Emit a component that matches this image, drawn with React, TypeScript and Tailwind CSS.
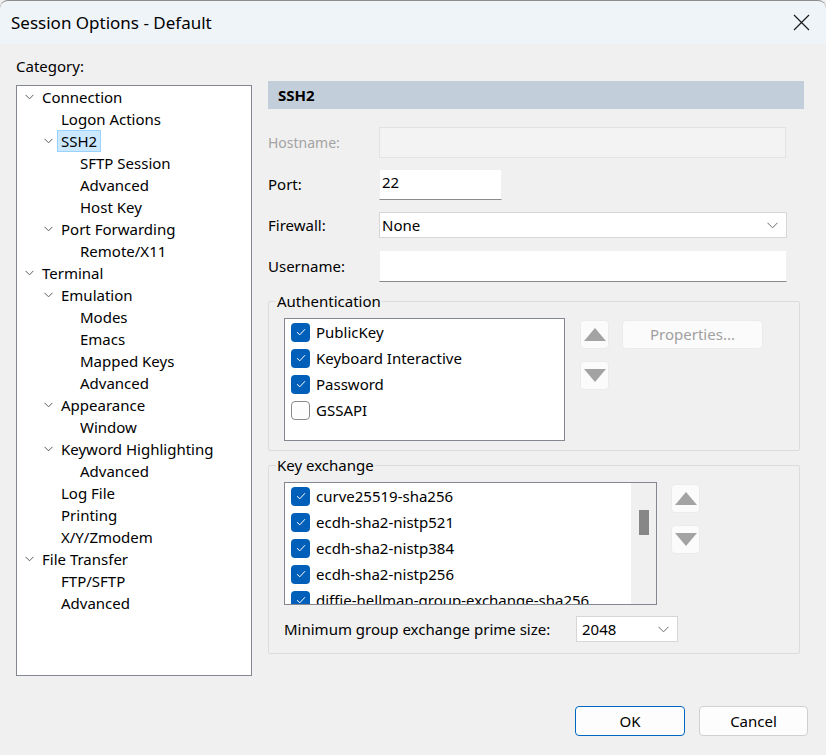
import React from "react";

type TreeItem = { label: string; level: 0 | 1 | 2; open?: boolean; selected?: boolean };

const tree: TreeItem[] = [
  { label: "Connection", level: 0, open: true },
  { label: "Logon Actions", level: 1 },
  { label: "SSH2", level: 1, open: true, selected: true },
  { label: "SFTP Session", level: 2 },
  { label: "Advanced", level: 2 },
  { label: "Host Key", level: 2 },
  { label: "Port Forwarding", level: 1, open: true },
  { label: "Remote/X11", level: 2 },
  { label: "Terminal", level: 0, open: true },
  { label: "Emulation", level: 1, open: true },
  { label: "Modes", level: 2 },
  { label: "Emacs", level: 2 },
  { label: "Mapped Keys", level: 2 },
  { label: "Advanced", level: 2 },
  { label: "Appearance", level: 1, open: true },
  { label: "Window", level: 2 },
  { label: "Keyword Highlighting", level: 1, open: true },
  { label: "Advanced", level: 2 },
  { label: "Log File", level: 1 },
  { label: "Printing", level: 1 },
  { label: "X/Y/Zmodem", level: 1 },
  { label: "File Transfer", level: 0, open: true },
  { label: "FTP/SFTP", level: 1 },
  { label: "Advanced", level: 1 },
];

const indent = { 0: "pl-[8px]", 1: "pl-[27px]", 2: "pl-[46px]" };

const Chevron = () => (
  <svg width="9" height="6" viewBox="0 0 9 6">
    <path d="M0.5 0.8 L4.5 4.8 L8.5 0.8" fill="none" stroke="#5c5c5c" strokeWidth="1" />
  </svg>
);

const DropChevron = () => (
  <svg width="11" height="7" viewBox="0 0 11 7">
    <path d="M0.5 0.8 L5.5 5.8 L10.5 0.8" fill="none" stroke="#6a6a6a" strokeWidth="1" />
  </svg>
);

const Check = ({ checked }: { checked: boolean }) =>
  checked ? (
    <span className="w-[19px] h-[19px] rounded-[4px] bg-[#005fb8] flex items-center justify-center shrink-0">
      <svg width="10" height="8" viewBox="0 0 10 8">
        <path d="M1 4.2 L3.8 6.8 L9 1.2" fill="none" stroke="#ffffff" strokeWidth="1" />
      </svg>
    </span>
  ) : (
    <span className="w-[19px] h-[19px] rounded-[4px] bg-[#fdfdfd] border border-[#8a8a8a] shrink-0" />
  );

const ArrowButton = ({ up }: { up?: boolean }) => (
  <div className="w-[29px] h-[29px] rounded-[4px] bg-[#fbfbfb] border border-[#ebebeb] flex items-center justify-center">
    <svg width="22" height="13" viewBox="0 0 22 13">
      {up ? <path d="M11 0 L22 13 L0 13 Z" fill="#a3a3a3" /> : <path d="M0 0 L22 0 L11 13 Z" fill="#a3a3a3" />}
    </svg>
  </div>
);

const ListRow = ({ label, checked }: { label: string; checked: boolean }) => (
  <div className="flex items-center h-[26px] pl-[6px] gap-[6px] whitespace-nowrap">
    <Check checked={checked} />
    <span>{label}</span>
  </div>
);

export default function App() {
  return (
    <div
      className="w-[826px] h-[755px] flex flex-col bg-[#f0f0f0] text-[15px] text-black overflow-hidden"
      style={{ fontFamily: '"Noto Sans", "Open Sans", sans-serif' }}
    >
      {/* Title bar */}
      <div className="h-[44px] shrink-0 bg-[#eff4f9] border-t border-[#8d8d8d] rounded-t-[8px] flex items-center justify-between pl-[11px] pr-[16px]">
        <span className="text-[17px]">Session Options - Default</span>
        <svg width="17" height="17" viewBox="0 0 17 17">
          <path d="M1 1 L16 16 M16 1 L1 16" stroke="#1a1a1a" strokeWidth="1.2" />
        </svg>
      </div>

      {/* Body */}
      <div className="flex-1 flex pl-[16px] gap-[16px]">
        {/* Category tree */}
        <div className="w-[236px] pt-[12px]">
          <div className="h-[20px] leading-[20px] mb-[9px]">Category:</div>
          <div className="h-[591px] bg-white border border-[#828790]">
            {tree.map((t, i) => (
              <div key={i} className={`flex items-center h-[22px] ${indent[t.level]}`}>
                <span className="w-[13px] flex items-center">{t.open && <Chevron />}</span>
                <span
                  className={`px-[3px] h-[22px] leading-[20px] border whitespace-nowrap ${
                    t.selected ? "bg-[#cce8ff] border-[#99d1ff]" : "border-transparent"
                  }`}
                >
                  {t.label}
                </span>
              </div>
            ))}
          </div>
        </div>

        {/* Settings page */}
        <div className="w-[536px] pt-[37px]">
          <div className="h-[28px] bg-[#c2cfdb] flex items-center pl-[10px] font-bold">SSH2</div>

          <div className="flex items-center mt-[18px]">
            <span className="w-[111px] text-[14px] text-[#a3a3a3]">Hostname:</span>
            <div className="w-[407px] h-[31px] bg-[#f3f3f3] border border-[#e2e2e2]" />
          </div>

          <div className="flex items-center mt-[11px]">
            <span className="w-[111px]">Port:</span>
            <div className="w-[123px] h-[31px] bg-white border border-[#f0f0f0] border-b-[#8a8a8a] pl-[2px] leading-[24px]">22</div>
          </div>

          <div className="flex items-center mt-[12px]">
            <span className="w-[111px]">Firewall:</span>
            <div className="w-[408px] h-[26px] bg-white border border-[#d6d6d6] flex items-center justify-between pl-[2px] pr-[8px]">
              <span>None</span>
              <DropChevron />
            </div>
          </div>

          <div className="flex items-center mt-[12px]">
            <span className="w-[111px]">Username:</span>
            <div className="w-[408px] h-[32px] bg-white border border-[#f0f0f0] border-b-[#8a8a8a]" />
          </div>

          {/* Authentication */}
          <fieldset className="w-[532px] mt-[10px] border border-[#dcdcdc] rounded-[2px] px-[7px] pb-[9px]">
            <legend className="px-[1px] leading-[18px]">Authentication</legend>
            <div className="flex pl-[8px] pt-[8px]">
              <div className="w-[281px] h-[123px] bg-white border border-[#828790]">
                <ListRow label="PublicKey" checked />
                <ListRow label="Keyboard Interactive" checked />
                <ListRow label="Password" checked />
                <ListRow label="GSSAPI" checked={false} />
              </div>
              <div className="ml-[15px] mt-[2px] flex flex-col gap-[12px]">
                <ArrowButton up />
                <ArrowButton />
              </div>
              <div className="ml-[13px] mt-[2px] w-[141px] h-[29px] rounded-[4px] bg-[#fbfbfb] border border-[#ebebeb] flex items-center justify-center text-[#a0a0a0]">
                Properties...
              </div>
            </div>
          </fieldset>

          {/* Key exchange */}
          <fieldset className="w-[532px] mt-[5px] border border-[#dcdcdc] rounded-[2px] px-[7px] pb-[11px]">
            <legend className="px-[1px] leading-[18px]">Key exchange</legend>
            <div className="pl-[8px] pt-[8px]">
              <div className="flex">
                <div className="w-[373px] h-[123px] bg-white border border-[#828790] flex overflow-hidden">
                  <div className="flex-1 overflow-hidden">
                    <ListRow label="curve25519-sha256" checked />
                    <ListRow label="ecdh-sha2-nistp521" checked />
                    <ListRow label="ecdh-sha2-nistp384" checked />
                    <ListRow label="ecdh-sha2-nistp256" checked />
                    <ListRow label="diffie-hellman-group-exchange-sha256" checked />
                  </div>
                  <div className="w-[25px] bg-[#f0f0f0] flex justify-center pt-[27px]">
                    <div className="w-[10px] h-[25px] bg-[#878787]" />
                  </div>
                </div>
                <div className="ml-[14px] mt-[2px] flex flex-col gap-[12px]">
                  <ArrowButton up />
                  <ArrowButton />
                </div>
              </div>
              <div className="flex items-center mt-[11px]">
                <span className="w-[292px] whitespace-nowrap">Minimum group exchange prime size:</span>
                <div className="w-[102px] h-[26px] bg-white border border-[#d6d6d6] flex items-center justify-between pl-[5px] pr-[8px]">
                  <span>2048</span>
                  <DropChevron />
                </div>
              </div>
            </div>
          </fieldset>
        </div>
      </div>

      {/* Footer buttons */}
      <div className="flex justify-end gap-[14px] pr-[18px] pb-[19px]">
        <button className="w-[110px] h-[30px] rounded-[4px] bg-[#fdfdfd] border border-[#0067c0]">OK</button>
        <button className="w-[109px] h-[30px] rounded-[4px] bg-[#fdfdfd] border border-[#d0d0d0]">Cancel</button>
      </div>
    </div>
  );
}
